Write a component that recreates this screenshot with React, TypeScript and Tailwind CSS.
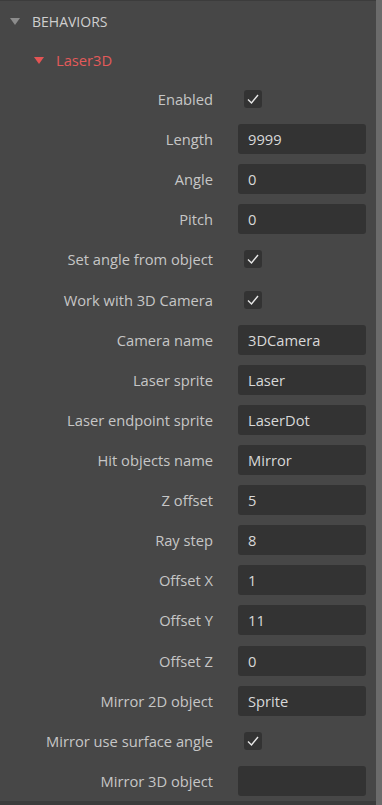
import React from "react";

type Row =
  | { label: string; kind: "check" }
  | { label: string; kind: "text"; value: string };

const rows: Row[] = [
  { label: "Enabled", kind: "check" },
  { label: "Length", kind: "text", value: "9999" },
  { label: "Angle", kind: "text", value: "0" },
  { label: "Pitch", kind: "text", value: "0" },
  { label: "Set angle from object", kind: "check" },
  { label: "Work with 3D Camera", kind: "check" },
  { label: "Camera name", kind: "text", value: "3DCamera" },
  { label: "Laser sprite", kind: "text", value: "Laser" },
  { label: "Laser endpoint sprite", kind: "text", value: "LaserDot" },
  { label: "Hit objects name", kind: "text", value: "Mirror" },
  { label: "Z offset", kind: "text", value: "5" },
  { label: "Ray step", kind: "text", value: "8" },
  { label: "Offset X", kind: "text", value: "1" },
  { label: "Offset Y", kind: "text", value: "11" },
  { label: "Offset Z", kind: "text", value: "0" },
  { label: "Mirror 2D object", kind: "text", value: "Sprite" },
  { label: "Mirror use surface angle", kind: "check" },
  { label: "Mirror 3D object", kind: "text", value: "" },
];

function Check() {
  return (
    <div className="w-[18px] h-[18px] rounded-[3px] bg-[#333333] flex items-center justify-center">
      <svg width="14" height="14" viewBox="0 0 14 14">
        <path d="M2 7.5 L5.5 11 L12 3" fill="none" stroke="#e8e8e8" strokeWidth="1.4" />
      </svg>
    </div>
  );
}

export default function App() {
  return (
    <div
      className="w-[382px] h-[805px] bg-[#474747] flex overflow-hidden"
      style={{ fontFamily: '"Open Sans", "Noto Sans", sans-serif' }}
    >
      <div className="flex-1 flex flex-col">
        <div className="h-[1px] bg-[#3c3c3c]" />
        <div className="h-[40px] flex items-center pl-[10px] gap-[12px]">
          <svg width="10" height="7" viewBox="0 0 10 7">
            <polygon points="0,0 10,0 5,7" fill="#8c8c8c" />
          </svg>
          <span className="text-[14px] text-[#cfcfcf]">BEHAVIORS</span>
        </div>
        <div className="h-[38px] flex items-center pl-[34px] gap-[12px]">
          <svg width="10" height="7" viewBox="0 0 10 7">
            <polygon points="0,0 10,0 5,7" fill="#e35454" />
          </svg>
          <span className="text-[14.7px] text-[#e35a5a]">Laser3D</span>
        </div>
        {rows.map((r) => (
          <div key={r.label} className="h-[40.12px] flex items-center">
            <div className="w-[213px] text-right text-[14.7px] text-[#c6c6c6] whitespace-nowrap">
              {r.label}
            </div>
            <div className="ml-[25px] w-[128px]">
              {r.kind === "check" ? (
                <div className="pl-[6px]">
                  <Check />
                </div>
              ) : (
                <div className="h-[30px] rounded-[3px] bg-[#333333] flex items-center pl-[10px] text-[14.7px] text-[#d8d8d8]">
                  {r.value}
                </div>
              )}
            </div>
          </div>
        ))}
        <div className="flex-1 bg-[#3b3b3b]" />
      </div>
      <div className="w-[6px] h-full bg-[#6b6b6b]" />
    </div>
  );
}
